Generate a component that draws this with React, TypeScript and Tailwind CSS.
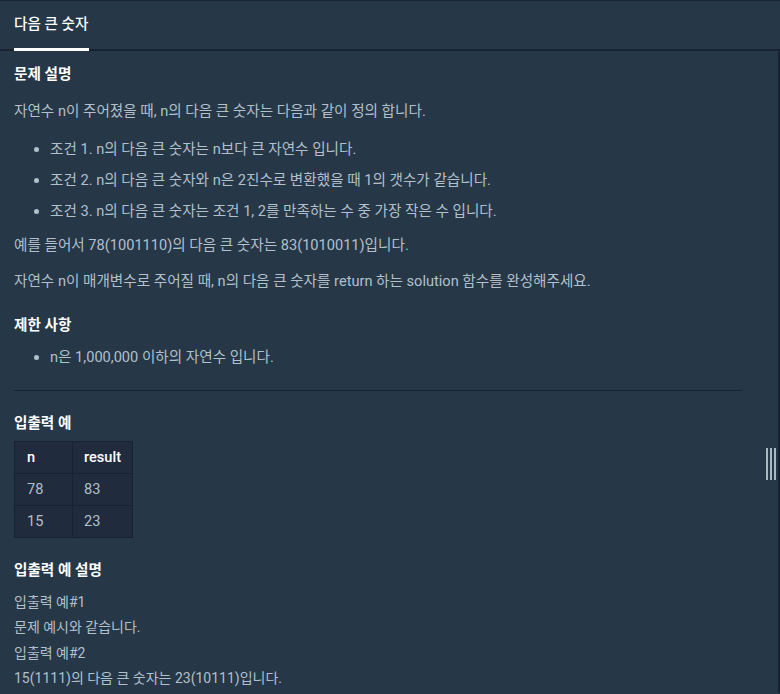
import React from "react";

const examples = [
  { n: "78", result: "83" },
  { n: "15", result: "23" },
];

const Bullet = ({ children }: { children: React.ReactNode }) => (
  <li className="flex items-center h-[31px]">
    <span className="w-[5px] h-[5px] rounded-full bg-[#b2c0cc] ml-[20px] mr-[11px]" />
    {children}
  </li>
);

const App = () => {
  return (
    <div
      className="w-[780px] h-[694px] overflow-hidden bg-[#263747] text-[14.6px] text-[#b2c0cc] border-t border-[#172334]"
      style={{ fontFamily: 'Roboto, "Noto Sans CJK KR", sans-serif' }}
    >
      <div className="h-[50px] flex items-end px-[14px] border-b-2 border-[#172334]">
        <div className="h-[49px] whitespace-nowrap pr-[1px] flex items-center text-white font-medium border-b-[3px] border-white -mb-[2px]">
          다음 큰 숫자
        </div>
      </div>
      <div className="relative flex h-[642px] border-r-2 border-[#172334]">
        <div className="w-[742px] pl-[14px]">
          <h3 className="text-white font-bold mt-[11px] leading-6">문제 설명</h3>
          <p className="mt-[13px] leading-6">
            자연수 n이 주어졌을 때, n의 다음 큰 숫자는 다음과 같이 정의 합니다.
          </p>
          <ul className="mt-[11px]">
            <Bullet>조건 1. n의 다음 큰 숫자는 n보다 큰 자연수 입니다.</Bullet>
            <Bullet>조건 2. n의 다음 큰 숫자와 n은 2진수로 변환했을 때 1의 갯수가 같습니다.</Bullet>
            <Bullet>조건 3. n의 다음 큰 숫자는 조건 1, 2를 만족하는 수 중 가장 작은 수 입니다.</Bullet>
          </ul>
          <p className="mt-[6px] leading-6">
            예를 들어서 78(1001110)의 다음 큰 숫자는 83(1010011)입니다.
          </p>
          <p className="mt-[12px] leading-6">
            자연수 n이 매개변수로 주어질 때, n의 다음 큰 숫자를 return 하는 solution 함수를 완성해주세요.
          </p>
          <h3 className="text-white font-bold mt-[20px] leading-6">제한 사항</h3>
          <ul className="mt-[5px]">
            <Bullet>n은 1,000,000 이하의 자연수 입니다.</Bullet>
          </ul>
          <hr className="mt-[17px] border-[#172334]" />
          <h3 className="text-white font-bold mt-[20px] leading-6">입출력 예</h3>
          <table className="mt-[6px] bg-[#202b3d] border-collapse">
            <thead>
              <tr className="h-[32px]">
                <th className="border border-[#172334] text-left font-medium text-white pl-[12px] w-[58px]">n</th>
                <th className="border border-[#172334] text-left font-medium text-white pl-[11px] pr-[11px]">result</th>
              </tr>
            </thead>
            <tbody>
              {examples.map((row, i) => (
                <tr key={i} className="h-[32px]">
                  <td className="border border-[#172334] pl-[12px]">{row.n}</td>
                  <td className="border border-[#172334] pl-[11px]">{row.result}</td>
                </tr>
              ))}
            </tbody>
          </table>
          <h3 className="text-white font-bold mt-[20px] leading-6">입출력 예 설명</h3>
          <div className="mt-[8px] text-[14px] leading-[25.3px]">
            <p>입출력 예#1</p>
            <p>문제 예시와 같습니다.</p>
            <p>입출력 예#2</p>
            <p>15(1111)의 다음 큰 숫자는 23(10111)입니다.</p>
          </div>
        </div>
        <div className="absolute left-[766px] top-[397px] h-[32px] flex gap-[2px]">
          <span className="w-[2px] h-full bg-[#a9b8c5]" />
          <span className="w-[2px] h-full bg-[#a9b8c5]" />
          <span className="w-[2px] h-full bg-[#a9b8c5]" />
        </div>
      </div>
    </div>
  );
};

export default App;
